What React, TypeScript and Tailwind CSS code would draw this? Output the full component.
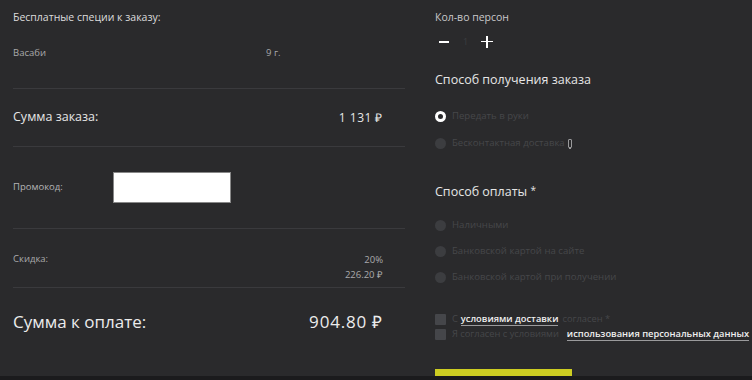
import React from "react";

const font = { fontFamily: '"Open Sans", "Liberation Sans", sans-serif' };

function Radio({ label, checked, extra }: { label: string; checked?: boolean; extra?: React.ReactNode }) {
  return (
    <div className="flex items-center h-[12px]">
      {checked ? (
        <span className="w-[11px] h-[11px] rounded-full border-[3px] border-white bg-[#2a2a2c]" />
      ) : (
        <span className="w-[11px] h-[11px] rounded-full bg-[#3c3d40]" />
      )}
      <span className="ml-[6px] text-[9.6px] text-[#46474a]">{label}</span>
      {extra}
    </div>
  );
}

export default function App() {
  return (
    <div className="w-[752px] h-[380px] bg-[#2a2a2c] flex flex-col overflow-hidden" style={font}>
      <div className="flex flex-1">
        {/* Left: order summary */}
        <div className="ml-[13px] w-[392px] shrink-0 flex flex-col">
          <div className="h-[89px] pt-[10px] border-b border-[#3a3a3d]">
            <div className="text-[10.5px] text-[#dcdcdc]">Бесплатные специи к заказу:</div>
            <div className="flex mt-[20px] text-[9.5px] text-[#a9a9ab]">
              <span className="w-[253px]">Васаби</span>
              <span>9 г.</span>
            </div>
          </div>
          <div className="h-[58px] flex items-center justify-between pr-[22px] border-b border-[#3a3a3d]">
            <span className="text-[12.5px] text-[#e6e6e6]">Сумма заказа:</span>
            <span className="text-[12px] text-[#e6e6e6] font-medium tracking-[0.5px]">1 131 ₽</span>
          </div>
          <div className="h-[82px] flex items-center border-b border-[#3a3a3d]">
            <span className="w-[100px] text-[9.5px] text-[#b4b4b6]">Промокод:</span>
            <div className="w-[118px] h-[31px] bg-white border border-[#888]" />
          </div>
          <div className="h-[59px] pt-[23px] flex justify-between pr-[22px] border-b border-[#3a3a3d]">
            <span className="text-[9.5px] text-[#a9a9ab]">Скидка:</span>
            <div className="flex flex-col items-end text-[9.5px] text-[#a9a9ab] leading-[15px]">
              <span>20%</span>
              <span>226.20 ₽</span>
            </div>
          </div>
          <div className="flex-1 pt-[22px] flex justify-between pr-[22px]">
            <span className="text-[17px] text-[#ececec] leading-[24px]">Сумма к оплате:</span>
            <span className="text-[17px] text-[#ececec] leading-[24px] tracking-[0.8px]">904.80 ₽</span>
          </div>
        </div>

        {/* Right: order options */}
        <div className="ml-[30px] flex-1 min-w-0 flex flex-col">
          <div className="mt-[10px] text-[10.5px] text-[#c8c8ca]">Кол-во персон</div>
          <div className="flex items-center mt-[9px] h-[14px]">
            <span className="ml-[4px] w-[10px] h-[1.5px] bg-white" />
            <span className="ml-[14px] text-[9px] text-[#3c3d40]">1</span>
            <span className="ml-[13px] relative w-[12px] h-[12px]">
              <span className="absolute left-0 top-[5px] w-[12px] h-[1.5px] bg-white" />
              <span className="absolute left-[5px] top-0 w-[1.5px] h-[12px] bg-white" />
            </span>
          </div>
          <div className="mt-[22px] text-[12.5px] text-[#e6e6e6]">Способ получения заказа</div>
          <div className="mt-[21px] flex flex-col gap-[15px]">
            <Radio label="Передать в руки" checked />
            <Radio
              label="Бесконтактная доставка"
              extra={
                <span className="ml-[3px] inline-block w-[4px] h-[9px] border border-[#9a9a9c] rounded-[1px] shadow-[0_2px_0_-1px_#9a9a9c]" />
              }
            />
          </div>
          <div className="mt-[33px] text-[12.5px] text-[#e6e6e6]">
            Способ оплаты <span className="text-[10px] align-top">*</span>
          </div>
          <div className="mt-[18px] flex flex-col gap-[14px]">
            <Radio label="Наличными" />
            <Radio label="Банковской картой на сайте" />
            <Radio label="Банковской картой при получении" />
          </div>
          <div className="mt-[29px] flex flex-col gap-[1px] text-[9.3px]">
            <div className="flex items-center whitespace-nowrap">
              <span className="w-[11px] h-[11px] bg-[#45464a] rounded-[1px] shrink-0" />
              <span className="ml-[6px] text-[#46474a]">С</span>
              <span className="ml-[3px] text-[#f0f0f0] font-semibold border-b border-[#9a9a9c] leading-[12px]">условиями доставки</span>
              <span className="ml-[4px] text-[#46474a]">согласен *</span>
            </div>
            <div className="flex items-center whitespace-nowrap">
              <span className="w-[11px] h-[11px] bg-[#45464a] rounded-[1px] shrink-0" />
              <span className="ml-[6px] text-[#46474a]">Я согласен с условиями</span>
              <span className="ml-[8px] text-[#f0f0f0] font-semibold border-b border-[#9a9a9c] leading-[12px]">использования персональных данных</span>
            </div>
          </div>
          <div className="mt-auto w-[137px] h-[7px] bg-[#cdcd22]" />
        </div>
      </div>
      <div className="h-[4px] bg-[#1b1b1d]" />
    </div>
  );
}
